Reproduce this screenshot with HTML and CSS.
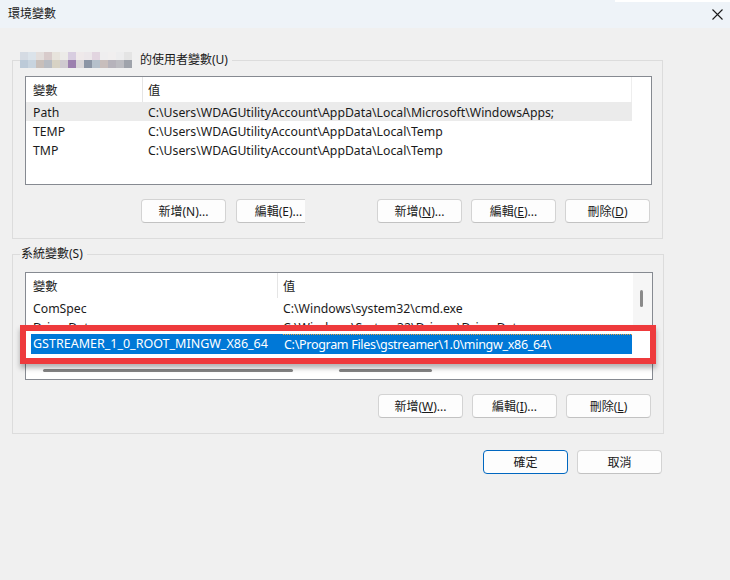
FILE: index.html
```html
<!DOCTYPE html>
<html lang="zh-Hant">
<head>
    <meta charset="UTF-8">
    <title>環境變數</title>
    <link rel="stylesheet" href="styles.css">
</head>
<body>
    <div class="window">
        <header class="titlebar">
            <span class="title">環境變數</span>
            <svg class="close" width="11" height="11" viewBox="0 0 11 11" aria-hidden="true">
                <path d="M0.5 0.5L10.5 10.5M10.5 0.5L0.5 10.5" stroke="#1b1b1b" stroke-width="1.1" fill="none"/>
            </svg>
        </header>

        <main class="content">
            <!-- user variables -->
            <fieldset class="group">
                <legend>
                    <span class="mosaic">
                        <i style="background:#d5dbe3"></i><i style="background:#dbe3ea"></i><i style="background:#e3dedc"></i><i style="background:#d8cbcb"></i><i style="background:#e7e3dc"></i><i style="background:#ecebe8"></i><i style="background:#d8cde0"></i><i style="background:#efe9ea"></i><i style="background:#ece7ea"></i><i style="background:#e2d5e0"></i><i style="background:#efeeef"></i><i style="background:#f1efef"></i><i style="background:#ededee"></i><i style="background:#e4e4e4"></i>
                        <i style="background:#bccad8"></i><i style="background:#c8d4df"></i><i style="background:#c8bfba"></i><i style="background:#b8bcc3"></i><i style="background:#d7d2c4"></i><i style="background:#cfcad0"></i><i style="background:#9c80af"></i><i style="background:#d9d6d8"></i><i style="background:#8b95a5"></i><i style="background:#b5c0cb"></i><i style="background:#c8bebc"></i><i style="background:#b6b3bb"></i><i style="background:#bcbcc1"></i><i style="background:#9fa3ab"></i>
                    </span>的使用者變數(U)
                </legend>

                <div class="list list-user">
                    <div class="row head">
                        <div class="c1">變數</div>
                        <div class="c2">值</div>
                    </div>
                    <div class="row hot">
                        <div class="c1">Path</div>
                        <div class="c2">C:\Users\WDAGUtilityAccount\AppData\Local\Microsoft\WindowsApps;</div>
                    </div>
                    <div class="row">
                        <div class="c1">TEMP</div>
                        <div class="c2">C:\Users\WDAGUtilityAccount\AppData\Local\Temp</div>
                    </div>
                    <div class="row">
                        <div class="c1">TMP</div>
                        <div class="c2">C:\Users\WDAGUtilityAccount\AppData\Local\Temp</div>
                    </div>
                </div>

                <div class="btn-row">
                    <div class="btn-group left">
                        <button class="btn">新增(N)...</button>
                        <span class="clip"><button class="btn">編輯(E)...</button></span>
                    </div>
                    <div class="btn-group right">
                        <button class="btn">新增(<u>N</u>)...</button>
                        <button class="btn">編輯(<u>E</u>)...</button>
                        <button class="btn">刪除(<u>D</u>)</button>
                    </div>
                </div>
            </fieldset>

            <!-- system variables -->
            <fieldset class="group sys">
                <legend>系統變數(S)</legend>

                <div class="list-wrap">
                    <div class="list list-sys">
                        <div class="list-body">
                            <div class="cols">
                                <div class="row head">
                                    <div class="c1">變數</div>
                                    <div class="c2">值</div>
                                </div>
                                <div class="row">
                                    <div class="c1">ComSpec</div>
                                    <div class="c2">C:\Windows\system32\cmd.exe</div>
                                </div>
                                <div class="row">
                                    <div class="c1">DriverData</div>
                                    <div class="c2">C:\Windows\System32\Drivers\DriverData</div>
                                </div>
                            </div>
                            <div class="vscroll"><span class="thumb"></span></div>
                        </div>
                        <div class="hscroll">
                            <span class="hthumb a"></span>
                            <span class="hthumb b"></span>
                        </div>
                    </div>

                    <!-- magnified highlight pasted over the list -->
                    <div class="callout">
                        <div class="row selected">
                            <div class="c1">GSTREAMER_1_0_ROOT_MINGW_X86_64</div>
                            <div class="c2">C:\Program Files\gstreamer\1.0\mingw_x86_64\</div>
                        </div>
                    </div>
                </div>

                <div class="btn-row">
                    <div class="btn-group right">
                        <button class="btn">新增(<u>W</u>)...</button>
                        <button class="btn">編輯(<u>I</u>)...</button>
                        <button class="btn">刪除(<u>L</u>)</button>
                    </div>
                </div>
            </fieldset>

            <div class="dialog-buttons">
                <button class="btn default">確定</button>
                <button class="btn">取消</button>
            </div>
        </main>
    </div>
</body>
</html>
```

FILE: styles.css
```css
* {
    box-sizing: border-box;
}

body {
    margin: 0;
    background: #f0f0f0;
    font-family: "Noto Sans", "Noto Sans CJK TC", sans-serif;
    font-size: 12px;
    color: #1a1a1a;
}

.window {
    width: 730px;
    height: 580px;
    position: relative;
}

/* title bar */
.titlebar {
    height: 28px;
    background: #eef3f8;
    display: flex;
    align-items: center;
    justify-content: space-between;
    padding: 0 7px 0 8px;
    position: relative;
}

.titlebar::after {
    content: "";
    position: absolute;
    top: 0;
    right: 0;
    width: 115px;
    height: 2px;
    background: #fff;
}

.title {
    line-height: 16px;
}

.close {
    margin-top: 1px;
}

.content {
    padding: 24px 0 0 12px;
}

/* group boxes */
.group {
    width: 651px;
    margin: 0;
    border: 1px solid #dcdcdc;
    padding: 8px 10px 15px 12px;
}

.group.sys {
    margin-top: 7px;
}

.group legend {
    padding: 0 4px 0 0;
    margin-left: -5px;
    line-height: 16px;
    height: 16px;
    display: flex;
    align-items: center;
}

.group.sys legend {
    padding-left: 1px;
}

.mosaic {
    display: grid;
    grid-template-columns: repeat(14, 8px);
    grid-auto-rows: 8px;
    margin-right: 8px;
}

.mosaic i {
    display: block;
}

/* list views */
.list {
    border: 1px solid #868a91;
    background: #fff;
    font-size: 12.25px;
}

.list-user {
    height: 109px;
}

.row {
    display: flex;
    height: 19px;
    align-items: center;
    white-space: nowrap;
    line-height: 16px;
    padding-top: 2px;
}

.row.head {
    height: 25px;
    align-items: stretch;
    padding-top: 0;
}

.row.head > div {
    display: flex;
    align-items: center;
    padding-top: 3px;
}

.row.head .c1 {
    border-right: 1px solid #e5e5e5;
}

.list-user .row.head .c2 {
    border-right: 1px solid #eeeeee;
}

.c1 {
    padding-left: 7px;
    overflow: hidden;
    flex: none;
}

.c2 {
    padding-left: 5px;
    overflow: hidden;
    flex: none;
}

.list-user .c1 { width: 117px; }
.list-user .c2 { width: 489px; }

.list-sys .c1 { width: 252px; }
.list-sys .c2 { width: 354px; }

.row.hot {
    width: 606px;
    background: #ebebeb;
}

.row.selected {
    background: #0078d7;
    color: #fff;
}

.list-wrap {
    position: relative;
    margin-top: 2px;
}

.list-sys {
    height: 108px;
    display: flex;
    flex-direction: column;
}

.list-body {
    flex: 1;
    min-height: 0;
    display: flex;
    overflow: hidden;
}

.cols {
    width: 607px;
    overflow: hidden;
}

.vscroll {
    width: 19px;
    background: #f6f6f6;
    padding: 17px 0 0 7px;
}

.vscroll .thumb {
    display: block;
    width: 3px;
    height: 17px;
    border-radius: 2px;
    background: #8a8a8a;
}

.hscroll {
    height: 16px;
    display: flex;
    padding-top: 6px;
}

.hthumb {
    height: 3px;
    border-radius: 2px;
    background: #858585;
}

.hthumb.a { margin-left: 17px; width: 250px; }
.hthumb.b { margin-left: 46px; width: 93px; }

/* red highlight box over the list */
.callout {
    position: absolute;
    left: -5px;
    top: 53px;
    width: 636px;
    height: 39px;
    border: 6px solid #ee3a3c;
    background: #fff;
    padding: 3px 0 0 5px;
    box-shadow: 0 4px 5px rgba(0, 0, 0, 0.3);
}

.callout .row {
    width: 601px;
    height: 20px;
    font-size: 12.5px;
    padding-top: 0;
}

.callout .c1 {
    width: 252px;
    padding-left: 2px;
}

.callout .c2 {
    padding-left: 1px;
    align-self: stretch;
    display: flex;
    align-items: center;
    flex: 1;
    letter-spacing: -0.3px;
    border-top: 1px dotted #f2a33a;
}

/* buttons */
.btn {
    width: 85px;
    height: 24px;
    padding: 0;
    font: inherit;
    color: #1a1a1a;
    background: #fdfdfd;
    border: 1px solid #d3d3d3;
    border-bottom-color: #c2c2c2;
    border-radius: 4px;
}

.btn u {
    text-underline-offset: 1px;
}

.btn-row {
    display: flex;
    margin-top: 14px;
    padding-right: 2px;
}

.btn-group {
    display: flex;
    gap: 9px;
}

.btn-group.left {
    margin-left: 116px;
    gap: 10px;
}

.btn-group.right {
    margin-left: auto;
}

.clip {
    display: block;
    width: 69px;
    overflow: hidden;
}

.dialog-buttons {
    width: 651px;
    display: flex;
    justify-content: flex-end;
    gap: 9px;
    margin-top: 16px;
    padding-right: 1px;
}

.btn.default {
    border-color: #0067c0;
}
```
